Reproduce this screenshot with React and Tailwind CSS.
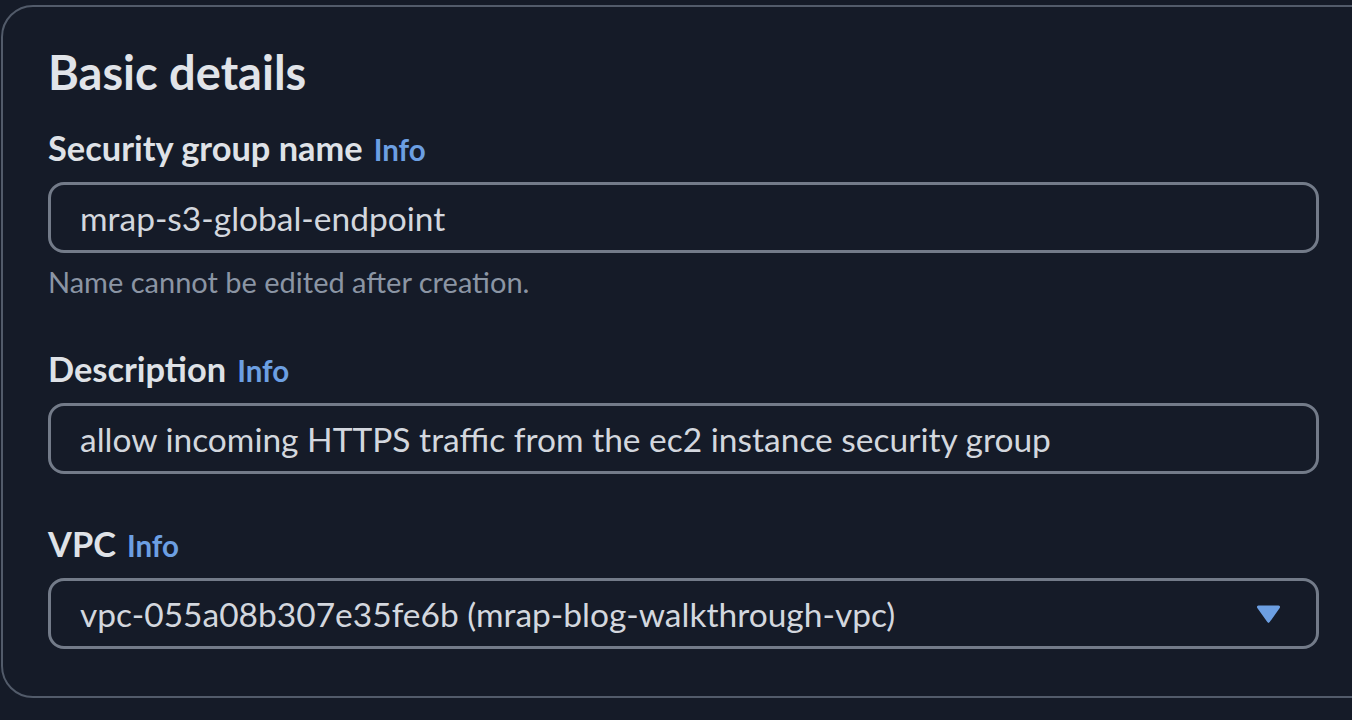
// Security group form – "Basic details" card (dark console theme)
const FONT = { fontFamily: 'Lato, "Noto Sans", sans-serif' }

function Label({ children, className = '' }) {
  return (
    <div className={`flex items-baseline gap-[11px] ${className}`}>
      <span className="text-[34.4px] leading-[40px] font-bold text-[#dfe2e7]">{children}</span>
      <span className="text-[29.5px] leading-[40px] font-bold text-[#6c9fe2]">Info</span>
    </div>
  )
}

function Field({ value, select = false, className = '' }) {
  return (
    <div
      className={`h-[71px] flex items-center rounded-[16px] border-[3px] border-[#737b89] pl-[29px] pr-[35px] ${className}`}
    >
      <span className="flex-1 text-[33.5px] leading-[40px] text-[#d3d7de] whitespace-nowrap">{value}</span>
      {select && (
        <svg width="25" height="20" viewBox="0 0 25 20" className="shrink-0">
          <path d="M2.5 1.5h20a1.5 1.5 0 0 1 1.2 2.4l-10 14.2a1.5 1.5 0 0 1-2.4 0L1.3 3.9A1.5 1.5 0 0 1 2.5 1.5z" fill="#6c9fe2" />
        </svg>
      )}
    </div>
  )
}

export default function App() {
  return (
    <div className="w-[1352px] h-[720px] overflow-hidden bg-[#151b28] pt-[5px] pl-[1px]" style={FONT}>
      <div className="w-[1400px] rounded-[32px] border-2 border-[#525b6a] pt-[37px] pb-[47px] pl-[45px]">
        <div className="w-[1271px] flex flex-col">
          <h2 className="text-[47px] leading-[56px] font-bold text-[#e1e4e9]">Basic details</h2>

          <Label className="mt-[28px]">Security group name</Label>
          <Field value="mrap-s3-global-endpoint" className="mt-[12px]" />
          <p className="mt-[12px] text-[29px] leading-[34px] text-[#8b95a4]">Name cannot be edited after creation.</p>

          <Label className="mt-[50px]">Description</Label>
          <Field value="allow incoming HTTPS traffic from the ec2 instance security group" className="mt-[12px]" />

          <Label className="mt-[50px]">VPC</Label>
          <Field value="vpc-055a08b307e35fe6b (mrap-blog-walkthrough-vpc)" select className="mt-[12px]" />
        </div>
      </div>
    </div>
  )
}
